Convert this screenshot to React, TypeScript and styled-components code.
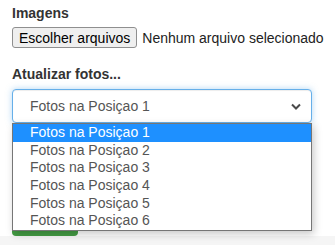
import styled, { createGlobalStyle } from 'styled-components';

// 기본 스타일
const GlobalStyle = createGlobalStyle`
  body {
    margin: 0;
    background: #ffffff;
    font-family: "Liberation Sans", Arial, sans-serif;
    color: #333333;
  }
`;

const Page = styled.div`
  width: 335px;
  height: 245px;
  overflow: hidden;
  display: flex;
  flex-direction: column;
`;

const Form = styled.div`
  flex: 1;
  width: 300px;
  padding: 3px 0 0 12px;
  display: flex;
  flex-direction: column;
`;

const Label = styled.div`
  font-size: 14px;
  font-weight: bold;
  line-height: 20px;
  color: #333333;
  margin-bottom: ${(p: { $mb: number }) => p.$mb}px;
`;

const FileRow = styled.div`
  display: flex;
  align-items: center;
  white-space: nowrap;
  margin-bottom: 16px;
`;

const FileButton = styled.div`
  flex-shrink: 0;
  height: 21px;
  box-sizing: border-box;
  padding: 0 6px;
  display: flex;
  align-items: center;
  font-size: 14px;
  color: #000000;
  background: #efefef;
  border: 1px solid #8f8f8f;
  border-radius: 3px;
`;

const FileStatus = styled.span`
  flex-shrink: 0;
  margin-left: 5px;
  font-size: 14px;
  color: #222222;
`;

const SelectWrap = styled.div`
  position: relative;
`;

const SelectBox = styled.div`
  height: 34px;
  box-sizing: border-box;
  padding: 0 10px 0 17px;
  display: flex;
  align-items: center;
  justify-content: space-between;
  font-size: 14px;
  color: #555555;
  background: #ffffff;
  border: 1px solid #66afe9;
  border-radius: 4px;
  box-shadow: inset 0 1px 1px rgba(0, 0, 0, 0.075), 0 0 6px rgba(102, 175, 233, 0.5);
`;

const Dropdown = styled.ul`
  position: absolute;
  top: 34px;
  left: 0;
  width: 300px;
  box-sizing: border-box;
  margin: 0;
  padding: 0;
  list-style: none;
  background: #ffffff;
  border: 1px solid #767676;
  box-shadow: 2px 3px 8px rgba(0, 0, 0, 0.22);
  z-index: 2;
`;

const Option = styled.li<{ $active?: boolean }>`
  height: 17.67px;
  line-height: 17.67px;
  padding-left: 17px;
  font-size: 14px;
  color: ${(p) => (p.$active ? '#ffffff' : '#555555')};
  background: ${(p) => (p.$active ? '#1e90ff' : 'transparent')};
`;

const SaveButton = styled.div`
  margin-top: 79px;
  width: 66px;
  height: 34px;
  background: #449d44;
  border-radius: 4px;
`;

const Footer = styled.div`
  height: 9px;
  background: #f5f5f5;
`;

const options = [1, 2, 3, 4, 5, 6];

const App = () => {
  return (
    <>
      <GlobalStyle />
      <Page>
        <Form>
          <Label $mb={4}>Imagens</Label>
          <FileRow>
            <FileButton>Escolher arquivos</FileButton>
            <FileStatus>Nenhum arquivo selecionado</FileStatus>
          </FileRow>
          <Label $mb={5}>Atualizar fotos...</Label>
          <SelectWrap>
            <SelectBox>
              <span>Fotos na Posiçao 1</span>
              <svg width="10" height="7" viewBox="0 0 10 7">
                <path d="M1 1.5 L5 5.5 L9 1.5" fill="none" stroke="#4a4a4a" strokeWidth="2" />
              </svg>
            </SelectBox>
            <Dropdown>
              {options.map((n) => (
                <Option key={n} $active={n === 1}>
                  Fotos na Posiçao {n}
                </Option>
              ))}
            </Dropdown>
          </SelectWrap>
          <SaveButton />
        </Form>
        <Footer />
      </Page>
    </>
  );
};

export default App;
